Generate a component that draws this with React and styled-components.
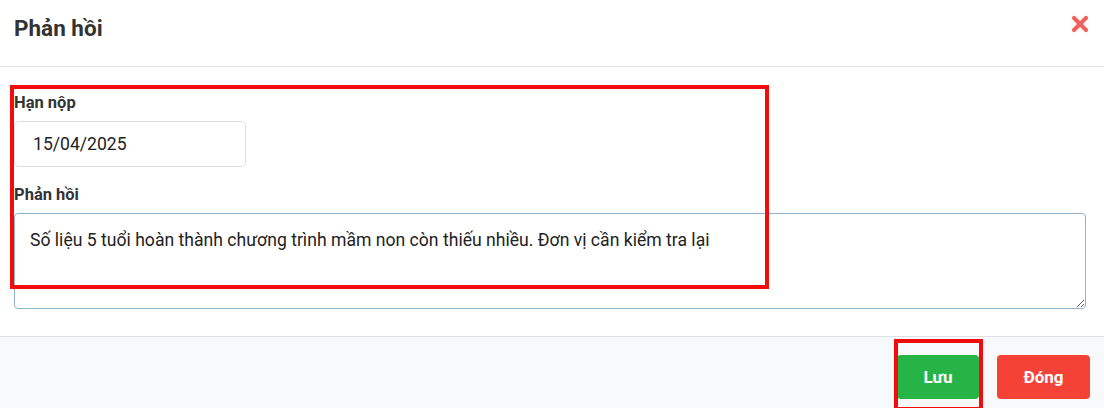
import React from "react";
import styled, { createGlobalStyle } from "styled-components";

const Global = createGlobalStyle`
  html, body { margin: 0; padding: 0; background: #fff; }
  body { font-family: Roboto, "Noto Sans", Arial, sans-serif; color: #333; }
  * { box-sizing: border-box; }
`;

const Modal = styled.div`
  position: relative;
  width: 1104px;
  height: 408px;
  overflow: hidden;
  background: #fff;
`;

const Header = styled.div`
  height: 67px;
  display: flex;
  align-items: flex-start;
  justify-content: space-between;
  padding: 15px 15px 0 14px;
  border-bottom: 1px solid #e2e2e2;
`;

const Title = styled.h4`
  margin: 0;
  font-size: 22.5px;
  line-height: 26px;
  font-weight: 700;
  color: #333;
`;

const CloseBtn = styled.button`
  border: 0;
  background: none;
  padding: 0;
  width: 18px;
  height: 18px;
  display: flex;
  cursor: pointer;
`;

const Body = styled.div`
  padding: 26px 18px 27px 14px;
  display: flex;
  flex-direction: column;
`;

const Label = styled.label`
  font-size: 16.5px;
  line-height: 20px;
  font-weight: 700;
  color: #333;
  margin-top: ${(p) => p.$mt || 0}px;
  margin-bottom: 8px;
`;

const Input = styled.input`
  width: 232px;
  height: 46px;
  border: 1px solid #dedede;
  border-radius: 5px;
  padding: 0 18px;
  font-family: inherit;
  font-size: 17.6px;
  color: #222;
  outline: none;
`;

const TextArea = styled.textarea`
  width: 100%;
  height: 96px;
  border: 1px solid #90b4c9;
  border-radius: 4px;
  padding: 14px 15px;
  font-family: inherit;
  font-size: 17.6px;
  line-height: 24px;
  color: #222;
  resize: vertical;
  outline: none;
`;

const Footer = styled.div`
  border-top: 1px solid #dde1e5;
  background: #f8f9fa;
  padding: 18px 14px 9px;
  display: flex;
  justify-content: flex-end;
  gap: 18px;
  height: 72px;
`;

const Button = styled.button`
  height: 44px;
  width: ${(p) => p.$w}px;
  border: 0;
  border-radius: 4px;
  background: ${(p) => p.$bg};
  color: #fff;
  font-family: inherit;
  font-size: 17px;
  font-weight: 700;
  cursor: pointer;
`;

const Highlight = styled.div`
  position: absolute;
  left: ${(p) => p.$x}px;
  top: ${(p) => p.$y}px;
  width: ${(p) => p.$w}px;
  height: ${(p) => p.$h}px;
  border: 4px solid #f20d0d;
  pointer-events: none;
`;

export default function App() {
  return (
    <>
      <Global />
      <Modal>
        <Header>
          <Title>Phản hồi</Title>
          <CloseBtn aria-label="close">
            <svg width="18" height="18" viewBox="0 0 18 18">
              <path
                d="M3 3 L15 15 M15 3 L3 15"
                stroke="#f0625d"
                strokeWidth="4.2"
                strokeLinecap="round"
              />
            </svg>
          </CloseBtn>
        </Header>
        <Body>
          <Label>Hạn nộp</Label>
          <Input defaultValue="15/04/2025" />
          <Label $mt={18}>Phản hồi</Label>
          <TextArea defaultValue="Số liệu 5 tuổi hoàn thành chương trình mầm non còn thiếu nhiều. Đơn vị cần kiểm tra lại" />
        </Body>
        <Footer>
          <Button $w={82} $bg="#27b446">Lưu</Button>
          <Button $w={93} $bg="#f44336">Đóng</Button>
        </Footer>
        <Highlight $x={10} $y={85} $w={759} $h={204} />
        <Highlight $x={894} $y={339} $w={89} $h={72} />
      </Modal>
    </>
  );
}
